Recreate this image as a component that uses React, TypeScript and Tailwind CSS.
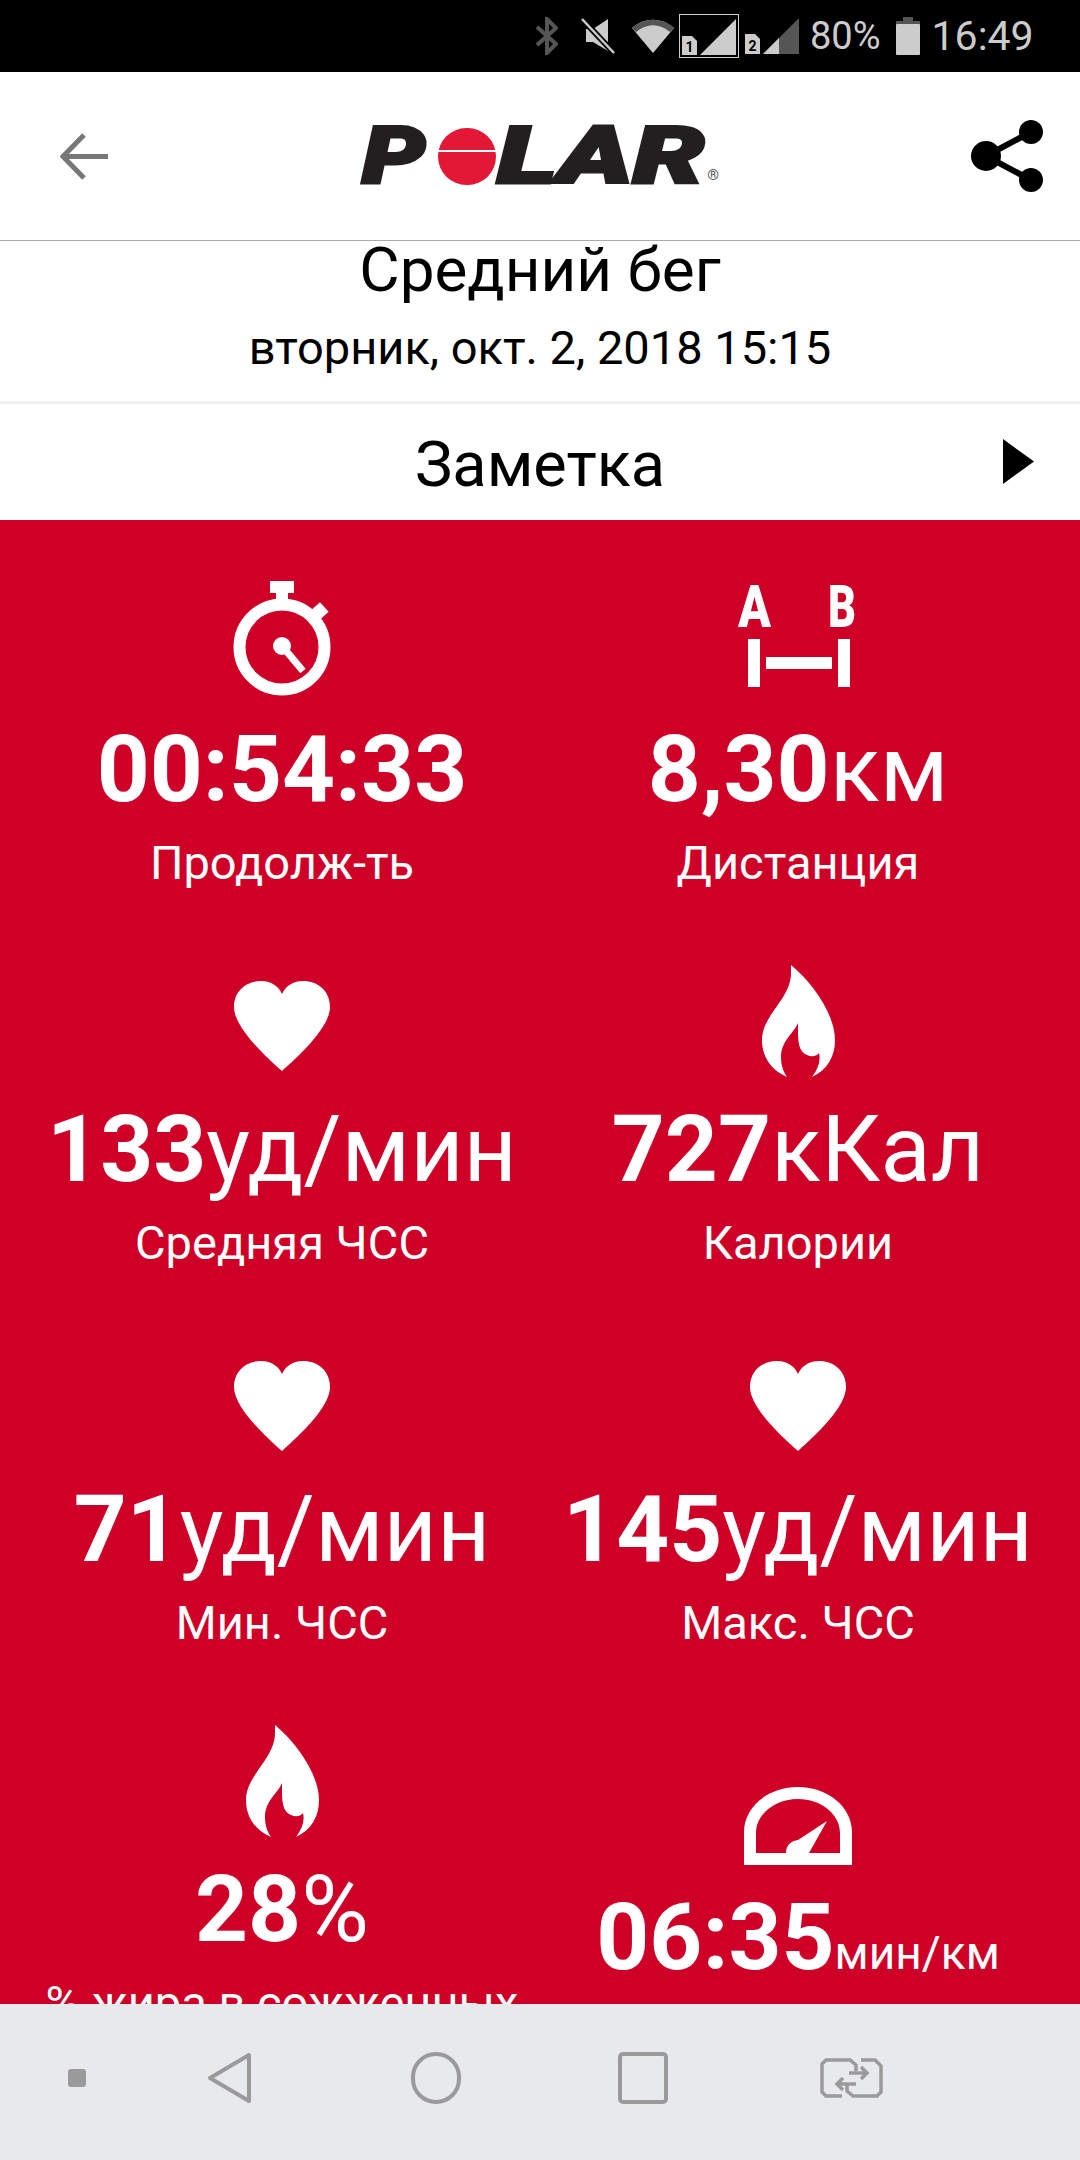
const RED = "bg-[#cf0028]";

function Heart() {
  return (
    <svg className="mb-[6px]" width="96" height="90" viewBox="0 0 96 90" fill="white">
      <path d="M48 90 C30 74 0 46 0 26 C0 10 12 0 27 0 C38 0 45 6 48 13 C51 6 58 0 69 0 C84 0 96 10 96 26 C96 46 66 74 48 90 Z" />
    </svg>
  );
}

function Flame() {
  return (
    <svg width="74" height="112" viewBox="0 0 74 112" fill="white">
      <path d="M30 0 C52 18 74 50 74 75 C74 92 66 105 51 112 C57 104 60 96 58 88 C55 92 50 92 46 90 C36 86 37 72 37 58 C33 68 20 76 20 92 C20 100 22 106 26 112 C10 105 1 92 1 75 C1 50 30 34 30 8 Z" />
    </svg>
  );
}

function Stopwatch() {
  return (
    <svg width="98" height="116" viewBox="0 0 98 116" fill="white">
      <rect x="37" y="0" width="24" height="12" />
      <rect x="43" y="10" width="12" height="10" />
      <rect x="77" y="25" width="16" height="13" transform="rotate(-42 85 31)" />
      <circle cx="49" cy="66" r="42.5" fill="none" stroke="white" strokeWidth="12" />
      <circle cx="49" cy="65" r="9" />
      <path d="M49 65 L70 90" stroke="white" strokeWidth="7" />
    </svg>
  );
}

function Distance() {
  return (
    <svg className="mb-[2px]" width="128" height="124" viewBox="-4 -8 128 124" fill="white">
      <text x="0" y="48" fontFamily="Roboto" fontWeight="900" fontSize="60" textLength="33" lengthAdjust="spacingAndGlyphs">A</text>
      <text x="90" y="48" fontFamily="Roboto" fontWeight="900" fontSize="60" textLength="28" lengthAdjust="spacingAndGlyphs">B</text>
      <rect x="10" y="60" width="12" height="48" />
      <rect x="100" y="60" width="12" height="48" />
      <rect x="28" y="78" width="66" height="12" />
    </svg>
  );
}

function Gauge() {
  return (
    <svg width="108" height="78" viewBox="0 0 108 78" fill="white">
      <path
        fillRule="evenodd"
        d="M0 78 V45 C0 20 24 0 54 0 C84 0 108 20 108 45 V78 Z M12 66 H96 V46 C96 27 77 12 54 12 C31 12 12 27 12 46 Z"
      />
      <path d="M42 66 C42 58 47 54 54 53 L83 34 L65 66 Z" />
    </svg>
  );
}

function Stat({
  icon,
  value,
  unit,
  small,
  label,
  className,
}: {
  icon: React.ReactNode;
  value: string;
  unit?: string;
  small?: boolean;
  label?: string;
  className?: string;
}) {
  return (
    <div className={"flex flex-col items-center " + (className ?? "")}>
      <div className="flex h-[116px] items-end justify-center">{icon}</div>
      <div className="mt-[18px] h-[110px] whitespace-nowrap text-[92.5px] leading-[110px] font-bold">
        {value}
        {unit && (
          <span className={small ? "text-[46px] font-normal" : "font-normal"}>{unit}</span>
        )}
      </div>
      {label && <div className="mt-[8px] text-center text-[47px] leading-[60px]">{label}</div>}
    </div>
  );
}

function StatusBar() {
  return (
    <div className="flex h-[72px] shrink-0 items-center bg-black pl-[536px] text-[#cccccc]">
      <svg width="22" height="38" viewBox="0 0 22 38" fill="none" stroke="#555555" strokeWidth="4">
        <path d="M1 10 L20 27 L11 36 V2 L20 11 L1 28" />
      </svg>
      <svg className="ml-[23px]" width="35" height="36" viewBox="0 0 35 36">
        <path d="M5 11 H12 L27 1 V33 L12 24 H5 Z" fill="#cccccc" />
        <path d="M1 1 L33 35" stroke="#000000" strokeWidth="6" />
        <path d="M1 1 L33 35" stroke="#cccccc" strokeWidth="2.5" />
      </svg>
      <svg className="ml-[16px]" width="42" height="34" viewBox="0 0 42 34">
        <path d="M0 9 C12 -2 30 -2 42 9 L21 34 Z" fill="#cccccc" />
        <path d="M0 9 C12 -2 30 -2 42 9 L38 13 C27 4 15 4 4 13 Z" fill="#555555" />
      </svg>
      <div className="ml-[5px] flex h-[44px] w-[60px] border border-[#cccccc]">
        <svg width="58" height="42" viewBox="0 0 58 42">
          <path d="M2 21 H12 L17 26 V40 H2 Z" fill="#cccccc" />
          <text x="5.5" y="37" fontFamily="Roboto" fontWeight="700" fontSize="14" fill="#000000">1</text>
          <path d="M20 40 L56 4 V40 Z" fill="#cccccc" />
        </svg>
      </div>
      <svg className="ml-[6px]" width="54" height="38" viewBox="0 0 54 38">
        <path d="M0 17 H10 L15 22 V37 H0 Z" fill="#cccccc" />
        <text x="3.5" y="34" fontFamily="Roboto" fontWeight="700" fontSize="14" fill="#000000">2</text>
        <path d="M18 37 L54 1 V37 Z" fill="#555555" />
        <path d="M18 37 L34 21 V37 Z" fill="#cccccc" />
      </svg>
      <span className="ml-[11px] font-['Roboto'] text-[38px] leading-none">80%</span>
      <svg className="ml-[15px]" width="24" height="38" viewBox="0 0 24 38">
        <rect x="7" y="0" width="10" height="4" fill="#555555" />
        <rect x="0" y="4" width="24" height="4" fill="#555555" />
        <rect x="0" y="7" width="24" height="31" rx="1" fill="#cccccc" />
      </svg>
      <span className="ml-[12px] font-['Roboto'] text-[41px] leading-none">16:49</span>
    </div>
  );
}

function Logo() {
  return (
    <div className="relative flex h-[57px] w-[355px] items-center font-['Roboto'] text-[80px] leading-none font-black text-[#231f20] italic [-webkit-text-stroke:3px_#231f20]">
      <span className="w-[76px] origin-left scale-x-[1.25]">P</span>
      <div className="relative h-[57px] w-[58px] rounded-full bg-[#e31837]">
        <div className="absolute top-[22px] h-[2px] w-full bg-white" />
      </div>
      <span className="ml-[1px] flex-1 origin-left scale-x-[1.42] whitespace-nowrap">LAR</span>
      <span className="absolute right-[-2px] bottom-[2px] text-[15px] font-normal not-italic [-webkit-text-stroke:0px] text-[#555555]">®</span>
    </div>
  );
}

function NavBar() {
  return (
    <div className="flex h-[156px] shrink-0 items-center bg-[#e8e9ed] pb-[9px] pl-[68px]">
      <div className="h-[18px] w-[18px] rounded-[3px] bg-[#9a9a9a]" />
      <svg className="ml-[121px]" width="45" height="52" viewBox="0 0 45 52" fill="none" stroke="#9a9a9a" strokeWidth="4" strokeLinejoin="round">
        <path d="M42 3 V49 L3 26 Z" />
      </svg>
      <div className="ml-[159px] h-[52px] w-[50px] rounded-full border-[4px] border-[#9a9a9a]" />
      <div className="ml-[157px] h-[52px] w-[50px] rounded-[5px] border-[4px] border-[#9a9a9a]" />
      <svg className="ml-[152px]" width="63" height="40" viewBox="0 0 63 40" fill="none" stroke="#9a9a9a" strokeWidth="3.5">
        <path d="M36 13 V7 L30 2 H6 L2 6 V34 L6 38 H22" />
        <path d="M27 27 V33 L33 38 H57 L61 34 V8 L55 2 H41" />
        <path d="M29 15 H46 M41 9 L47 15 L41 21" />
        <path d="M36 26 H18 M23 20 L17 26 L23 32" />
      </svg>
    </div>
  );
}

export default function App() {
  return (
    <div className="flex h-[2160px] w-[1080px] flex-col overflow-hidden bg-white font-['Roboto',sans-serif] text-black">
      <StatusBar />
      <div className="flex h-[169px] shrink-0 items-center justify-between border-b border-[#aaaaaa] pr-[36px] pl-[60px]">
        <svg width="48" height="47" viewBox="0 0 48 47" fill="none" stroke="#777777" strokeWidth="5">
          <path d="M24 2 L3 23.5 L24 45" />
          <path d="M3 23.5 H48" />
        </svg>
        <Logo />
        <svg width="73" height="72" viewBox="0 0 73 72" fill="black">
          <circle cx="15" cy="36" r="15" />
          <circle cx="60" cy="12" r="12" />
          <circle cx="60" cy="60" r="12" />
          <path d="M15 36 L60 12 M15 36 L60 60" stroke="black" strokeWidth="6" />
        </svg>
      </div>
      <div className="flex h-[163px] shrink-0 flex-col items-center border-b-[3px] border-[#efefef]">
        <div className="mt-[-4px] text-[62px] leading-[66px]">Средний бег</div>
        <div className="mt-[20px] text-[47px] leading-[50px]">вторник, окт. 2, 2018 15:15</div>
      </div>
      <div className="relative flex h-[116px] shrink-0 items-center justify-center pt-[6px] text-[63px]">
        Заметка
        <svg className="absolute top-[35px] right-[46px]" width="31" height="45" viewBox="0 0 31 45" fill="black">
          <path d="M0 0 L31 22.5 L0 45 Z" />
        </svg>
      </div>
      <div className={"min-h-0 flex-1 overflow-hidden px-[24px] pt-[61px] text-white " + RED}>
        <div className="grid grid-cols-2 auto-rows-[380px]">
          <Stat icon={<Stopwatch />} value="00:54:33" label="Продолж-ть" />
          <Stat icon={<Distance />} value="8,30" unit="км" label="Дистанция" />
          <Stat icon={<Heart />} value="133" unit="уд/мин" label="Средняя ЧСС" />
          <Stat icon={<Flame />} value="727" unit="кКал" label="Калории" />
          <Stat icon={<Heart />} value="71" unit="уд/мин" label="Мин. ЧСС" />
          <Stat icon={<Heart />} value="145" unit="уд/мин" label="Макс. ЧСС" />
          <Stat icon={<Flame />} value="28" unit="%" label="% жира в сожженных" />
          <Stat className="mt-[28px]" icon={<Gauge />} value="06:35" unit="мин/км" small />
        </div>
      </div>
      <NavBar />
    </div>
  );
}
